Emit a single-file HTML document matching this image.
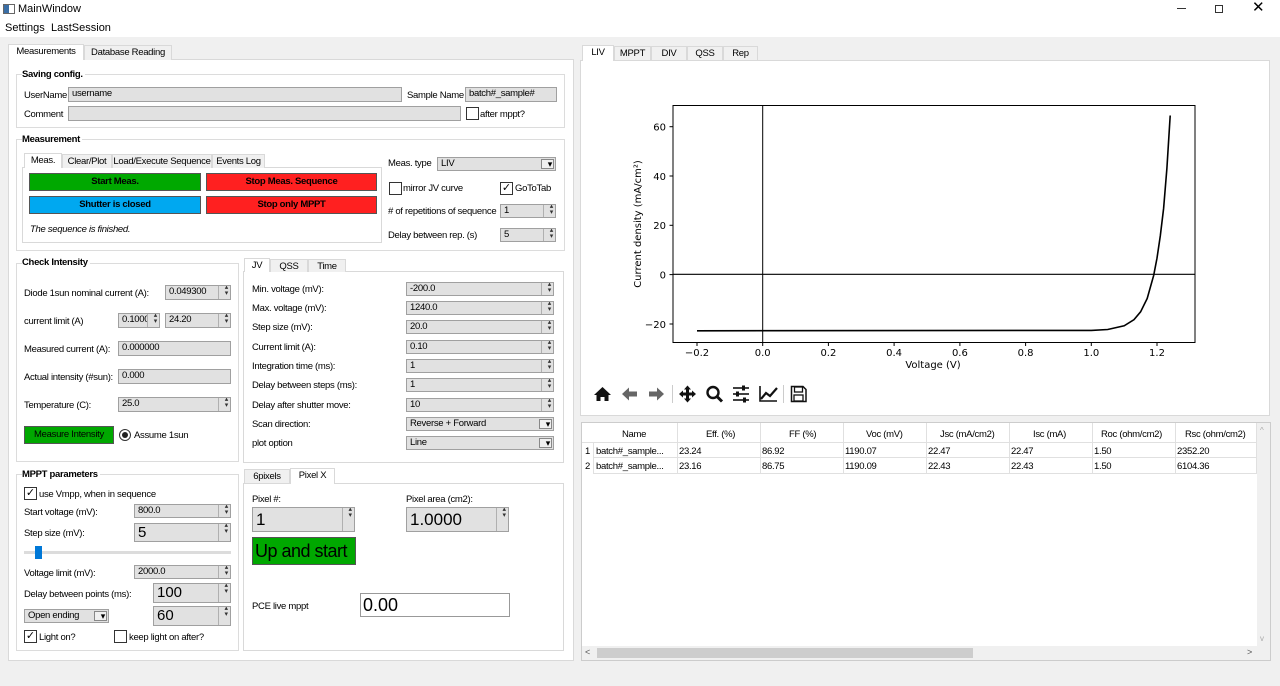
<!DOCTYPE html>
<html><head><meta charset="utf-8"><style>
*{box-sizing:border-box;margin:0;padding:0}
body{width:1280px;height:686px;background:#f0f0f0;position:relative;overflow:hidden;font-family:"Liberation Sans",sans-serif;font-size:9.5px;letter-spacing:-0.3px;color:#000}
.a{position:absolute}
.t{position:absolute;white-space:nowrap;line-height:13px}
.f{position:absolute;background:#e1e1e1;border:1px solid #a0a0a0;line-height:12px;padding-left:3px;white-space:nowrap;overflow:hidden}
.sp::after{content:"";position:absolute;right:0;top:0;bottom:0;width:11px;border-left:1px solid #b0b0b0;background:#e1e1e1}
.sp::before{content:"▴\A▾";white-space:pre;position:absolute;right:2px;top:-1px;font-size:7px;line-height:6px;z-index:2;color:#333}
.cb::after{content:"";position:absolute;right:1px;top:1px;bottom:1px;width:11px;border:1px solid #888;background:#f0f0f0}
.cb::before{content:"▾";position:absolute;right:3px;top:0;font-size:9px;z-index:2}
.g{position:absolute;border:1px solid #dcdcdc;background:#fff}
.gt{position:absolute;font-weight:bold;background:#fff;padding-right:2px;line-height:13px;white-space:nowrap}
.tab{position:absolute;border:1px solid #d9d9d9;border-bottom:none;background:#f0f0f0;text-align:center;line-height:14px;white-space:nowrap;overflow:hidden}
.tab.s{background:#fff;z-index:2}
.pane{position:absolute;border:1px solid #d9d9d9;background:#fff}
.btn{position:absolute;text-align:center;font-weight:bold;border:1px solid #555;line-height:16px;white-space:nowrap}
.chk{position:absolute;width:13px;height:13px;border:1px solid #333;background:#fff;font-size:11px;line-height:11px;text-align:center;letter-spacing:0}
.big{font-size:17px;line-height:22px;background:#e1e1e1;letter-spacing:0}
</style></head><body>
<div class="a" style="left:0;top:0;width:1280px;height:37px;background:#fff"></div>
<div class="a" style="left:3px;top:4px;width:12px;height:10px;border:1px solid #666;background:linear-gradient(90deg,#3a6ea5 50%,#fff 50%)"></div>
<div class="t" style="left:18px;top:3px;font-size:11px;letter-spacing:0">MainWindow</div>
<div class="t" style="left:5px;top:22px;font-size:11px;letter-spacing:0">Settings</div>
<div class="t" style="left:51px;top:22px;font-size:11px;letter-spacing:0">LastSession</div>
<div class="a" style="left:1177px;top:8px;width:9px;height:1px;background:#333"></div>
<div class="a" style="left:1215px;top:5px;width:8px;height:8px;border:1px solid #333"></div>
<div class="t" style="left:1252px;top:1px;font-size:15px">✕</div>

<div class="pane" style="left:8px;top:59px;width:566px;height:602px"></div>
<div class="tab s" style="left:8px;top:44px;width:76px;height:16px">Measurements</div>
<div class="tab" style="left:84px;top:45px;width:88px;height:15px">Database Reading</div>

<div class="g" style="left:16px;top:74px;width:549px;height:54px"></div>
<div class="gt" style="left:22px;top:68px">Saving config.</div>
<div class="t" style="left:24px;top:89px">UserName</div>
<div class="f" style="left:68px;top:87px;width:334px;height:15px">username</div>
<div class="t" style="left:407px;top:89px">Sample Name</div>
<div class="f" style="left:465px;top:87px;width:92px;height:15px">batch#_sample#</div>
<div class="t" style="left:24px;top:108px">Comment</div>
<div class="f" style="left:68px;top:106px;width:393px;height:15px"></div>
<div class="chk" style="left:466px;top:107px"></div>
<div class="t" style="left:480px;top:108px">after mppt?</div>

<div class="g" style="left:16px;top:139px;width:549px;height:112px"></div>
<div class="gt" style="left:22px;top:133px">Measurement</div>
<div class="pane" style="left:22px;top:167px;width:360px;height:76px"></div>
<div class="tab s" style="left:24px;top:153px;width:38px;height:15px">Meas.</div>
<div class="tab" style="left:62px;top:154px;width:50px;height:14px">Clear/Plot</div>
<div class="tab" style="left:112px;top:154px;width:100px;height:14px">Load/Execute Sequence</div>
<div class="tab" style="left:212px;top:154px;width:53px;height:14px">Events Log</div>
<div class="btn" style="left:29px;top:173px;width:172px;height:18px;background:#00a800">Start Meas.</div>
<div class="btn" style="left:206px;top:173px;width:171px;height:18px;background:#ff2020">Stop Meas. Sequence</div>
<div class="btn" style="left:29px;top:196px;width:172px;height:18px;background:#00a8f0">Shutter is closed</div>
<div class="btn" style="left:206px;top:196px;width:171px;height:18px;background:#ff2020">Stop only MPPT</div>
<div class="t" style="left:30px;top:223px;font-style:italic">The sequence is finished.</div>
<div class="t" style="left:388px;top:157px">Meas. type</div>
<div class="f cb" style="left:437px;top:157px;width:119px;height:14px">LIV</div>
<div class="chk" style="left:389px;top:182px"></div>
<div class="t" style="left:403px;top:182px">mirror JV curve</div>
<div class="chk" style="left:500px;top:182px">✓</div>
<div class="t" style="left:515px;top:182px">GoToTab</div>
<div class="t" style="left:388px;top:205px"># of repetitions of sequence</div>
<div class="f sp" style="left:500px;top:204px;width:56px;height:14px">1</div>
<div class="t" style="left:388px;top:229px">Delay between rep. (s)</div>
<div class="f sp" style="left:500px;top:228px;width:56px;height:14px">5</div>

<div class="g" style="left:16px;top:263px;width:223px;height:199px"></div>
<div class="gt" style="left:22px;top:256px">Check Intensity</div>
<div class="t" style="left:24px;top:287px">Diode 1sun nominal current (A):</div>
<div class="f sp" style="left:165px;top:285px;width:66px;height:15px">0.049300</div>
<div class="t" style="left:24px;top:315px">current limit (A)</div>
<div class="f sp" style="left:118px;top:313px;width:42px;height:15px">0.1000</div>
<div class="f sp" style="left:165px;top:313px;width:66px;height:15px">24.20</div>
<div class="t" style="left:24px;top:343px">Measured current (A):</div>
<div class="f" style="left:118px;top:341px;width:113px;height:15px">0.000000</div>
<div class="t" style="left:24px;top:371px">Actual intensity (#sun):</div>
<div class="f" style="left:118px;top:369px;width:113px;height:15px">0.000</div>
<div class="t" style="left:24px;top:399px">Temperature (C):</div>
<div class="f sp" style="left:118px;top:397px;width:113px;height:15px">25.0</div>
<div class="a" style="left:24px;top:426px;width:90px;height:18px;background:#00a800;border:1px solid #555;text-align:center;line-height:16px;white-space:nowrap">Measure Intensity</div>
<div class="a" style="left:119px;top:429px;width:12px;height:12px;border-radius:50%;border:1px solid #333;background:#fff"><div class="a" style="left:2px;top:2px;width:6px;height:6px;border-radius:50%;background:#222"></div></div>
<div class="t" style="left:134px;top:429px">Assume 1sun</div>

<div class="pane" style="left:243px;top:271px;width:321px;height:192px"></div>
<div class="tab s" style="left:244px;top:258px;width:26px;height:14px">JV</div>
<div class="tab" style="left:270px;top:259px;width:38px;height:13px">QSS</div>
<div class="tab" style="left:308px;top:259px;width:38px;height:13px">Time</div>
<div class="t" style="left:252px;top:283px">Min. voltage (mV):</div><div class="f sp" style="left:406px;top:282px;width:148px;height:14px">-200.0</div>
<div class="t" style="left:252px;top:302px">Max. voltage (mV):</div><div class="f sp" style="left:406px;top:301px;width:148px;height:14px">1240.0</div>
<div class="t" style="left:252px;top:321px">Step size (mV):</div><div class="f sp" style="left:406px;top:320px;width:148px;height:14px">20.0</div>
<div class="t" style="left:252px;top:341px">Current limit (A):</div><div class="f sp" style="left:406px;top:340px;width:148px;height:14px">0.10</div>
<div class="t" style="left:252px;top:360px">Integration time (ms):</div><div class="f sp" style="left:406px;top:359px;width:148px;height:14px">1</div>
<div class="t" style="left:252px;top:379px">Delay between steps (ms):</div><div class="f sp" style="left:406px;top:378px;width:148px;height:14px">1</div>
<div class="t" style="left:252px;top:399px">Delay after shutter move:</div><div class="f sp" style="left:406px;top:398px;width:148px;height:14px">10</div>
<div class="t" style="left:252px;top:418px">Scan direction:</div><div class="f cb" style="left:406px;top:417px;width:148px;height:14px">Reverse + Forward</div>
<div class="t" style="left:252px;top:437px">plot option</div><div class="f cb" style="left:406px;top:436px;width:148px;height:14px">Line</div>

<div class="g" style="left:16px;top:474px;width:223px;height:177px"></div>
<div class="gt" style="left:22px;top:468px">MPPT parameters</div>
<div class="chk" style="left:24px;top:487px">✓</div><div class="t" style="left:39px;top:488px">use Vmpp, when in sequence</div>
<div class="t" style="left:24px;top:506px">Start voltage (mV):</div><div class="f sp" style="left:134px;top:504px;width:97px;height:14px">800.0</div>
<div class="t" style="left:24px;top:527px">Step size (mV):</div><div class="f sp big" style="left:134px;top:523px;width:97px;height:19px;font-size:15px;line-height:17px">5</div>
<div class="a" style="left:24px;top:551px;width:207px;height:3px;background:#dcdcdc"></div>
<div class="a" style="left:35px;top:546px;width:7px;height:13px;background:#0078d7"></div>
<div class="t" style="left:24px;top:567px">Voltage limit (mV):</div><div class="f sp" style="left:134px;top:565px;width:97px;height:14px">2000.0</div>
<div class="t" style="left:24px;top:588px">Delay between points (ms):</div><div class="f sp big" style="left:153px;top:583px;width:78px;height:20px;font-size:15px;line-height:18px">100</div>
<div class="f cb" style="left:24px;top:609px;width:85px;height:14px">Open ending</div>
<div class="f sp big" style="left:153px;top:606px;width:78px;height:20px;font-size:15px;line-height:18px">60</div>
<div class="chk" style="left:24px;top:630px">✓</div><div class="t" style="left:39px;top:631px">Light on?</div>
<div class="chk" style="left:114px;top:630px"></div><div class="t" style="left:129px;top:631px">keep light on after?</div>

<div class="pane" style="left:243px;top:483px;width:321px;height:168px"></div>
<div class="tab" style="left:244px;top:469px;width:46px;height:14px">6pixels</div>
<div class="tab s" style="left:290px;top:468px;width:45px;height:16px">Pixel X</div>
<div class="t" style="left:252px;top:493px">Pixel #:</div>
<div class="f sp big" style="left:252px;top:507px;width:103px;height:25px;font-size:17px;line-height:23px">1</div>
<div class="t" style="left:406px;top:493px">Pixel area (cm2):</div>
<div class="f sp big" style="left:406px;top:507px;width:103px;height:25px;font-size:17px;line-height:23px">1.0000</div>
<div class="a" style="left:252px;top:537px;width:104px;height:28px;background:#00a800;border:1px solid #555;font-size:18px;line-height:26px;padding-left:2px;letter-spacing:-0.5px;white-space:nowrap">Up and start</div>
<div class="t" style="left:252px;top:600px">PCE live mppt</div>
<div class="a" style="left:360px;top:593px;width:150px;height:24px;border:1px solid #999;background:#fff;font-size:18px;line-height:22px;padding-left:2px;letter-spacing:0">0.00</div>

<div class="pane" style="left:580px;top:60px;width:690px;height:356px"></div>
<div class="tab s" style="left:582px;top:45px;width:32px;height:16px">LIV</div>
<div class="tab" style="left:614px;top:46px;width:37px;height:14px">MPPT</div>
<div class="tab" style="left:651px;top:46px;width:36px;height:14px">DIV</div>
<div class="tab" style="left:687px;top:46px;width:36px;height:14px">QSS</div>
<div class="tab" style="left:723px;top:46px;width:35px;height:14px">Rep</div>

<svg class="a" style="left:0;top:0;letter-spacing:0" width="1280" height="686" font-family="DejaVu Sans, sans-serif" font-size="10">
<rect x="673" y="105.5" width="522" height="237" fill="#fff" stroke="#000" stroke-width="1"/>
<line x1="762.7" y1="105.5" x2="762.7" y2="342.5" stroke="#000"/>
<line x1="673" y1="274.3" x2="1195" y2="274.3" stroke="#000" stroke-width="1.2"/>
<polyline fill="none" stroke="#000" stroke-width="1.6" points="697,330.8 1091.3,330.4 1107.7,329.5 1124.2,325.8 1134,319.7 1140.6,311.8 1147.2,298.5 1153.7,275.3 1157,258.1 1160.3,235.9 1163.6,208.5 1166.9,168.3 1170.2,115.5"/>
<g stroke="#000">
<line x1="697" y1="342.5" x2="697" y2="346"/><line x1="762.7" y1="342.5" x2="762.7" y2="346"/><line x1="828.4" y1="342.5" x2="828.4" y2="346"/><line x1="894.1" y1="342.5" x2="894.1" y2="346"/><line x1="959.9" y1="342.5" x2="959.9" y2="346"/><line x1="1025.6" y1="342.5" x2="1025.6" y2="346"/><line x1="1091.3" y1="342.5" x2="1091.3" y2="346"/><line x1="1157" y1="342.5" x2="1157" y2="346"/>
<line x1="669.5" y1="126.7" x2="673" y2="126.7"/><line x1="669.5" y1="176" x2="673" y2="176"/><line x1="669.5" y1="225.3" x2="673" y2="225.3"/><line x1="669.5" y1="274.6" x2="673" y2="274.6"/><line x1="669.5" y1="324" x2="673" y2="324"/>
</g>
<g text-anchor="middle">
<text x="697" y="356">−0.2</text><text x="762.7" y="356">0.0</text><text x="828.4" y="356">0.2</text><text x="894.1" y="356">0.4</text><text x="959.9" y="356">0.6</text><text x="1025.6" y="356">0.8</text><text x="1091.3" y="356">1.0</text><text x="1157" y="356">1.2</text>
<text x="933" y="368">Voltage (V)</text>
</g>
<g text-anchor="end">
<text x="666" y="130.5">60</text><text x="666" y="180">40</text><text x="666" y="229">20</text><text x="666" y="278.5">0</text><text x="666" y="328">−20</text>
</g>
<text transform="translate(641,224) rotate(-90)" text-anchor="middle">Current density (mA/cm²)</text>
<g fill="#111">
<path d="M594 395 L602.5 387 L611 395 L608.5 395 L608.5 401 L604.5 401 L604.5 397 L600.5 397 L600.5 401 L596.5 401 L596.5 395 Z"/>
<path d="M622 394 L629 387.5 L629 391.5 L637 391.5 L637 396.5 L629 396.5 L629 400.5 Z" fill="#666"/>
<path d="M664 394 L657 387.5 L657 391.5 L649 391.5 L649 396.5 L657 396.5 L657 400.5 Z" fill="#666"/>
<path d="M687.5 385.5 L691 389.5 L689 389.5 L689 392.5 L692 392.5 L692 390.5 L696 394 L692 397.5 L692 395.5 L689 395.5 L689 398.5 L691 398.5 L687.5 402.5 L684 398.5 L686 398.5 L686 395.5 L683 395.5 L683 397.5 L679 394 L683 390.5 L683 392.5 L686 392.5 L686 389.5 L684 389.5 Z"/>
</g>
<circle cx="713" cy="392.5" r="5.5" fill="none" stroke="#111" stroke-width="2.4"/>
<line x1="717" y1="396.5" x2="722" y2="401.5" stroke="#111" stroke-width="3"/>
<g stroke="#111" stroke-width="1.6"><line x1="733" y1="388" x2="749" y2="388"/><line x1="733" y1="394" x2="749" y2="394"/><line x1="733" y1="400" x2="749" y2="400"/></g>
<g fill="#111"><rect x="742" y="385.5" width="3" height="5"/><rect x="736" y="391.5" width="3" height="5"/><rect x="743" y="397.5" width="3" height="5"/></g>
<path d="M760 386 L760 401 L777 401" fill="none" stroke="#111" stroke-width="1.6"/>
<path d="M761 399 L766 393 L770 396 L777 388" fill="none" stroke="#111" stroke-width="2.2"/>
<path d="M791.5 386.5 L803 386.5 L806 389.5 L806 401.5 L791.5 401.5 Z" fill="none" stroke="#111" stroke-width="1.5"/>
<rect x="794.5" y="387" width="8" height="5" fill="none" stroke="#111" stroke-width="1.3"/>
<rect x="794" y="395" width="9" height="6" fill="none" stroke="#111" stroke-width="1.3"/>
<line x1="672.5" y1="385" x2="672.5" y2="403" stroke="#ccc"/><line x1="783.5" y1="385" x2="783.5" y2="403" stroke="#ccc"/>
</svg>

<div class="a" style="left:581px;top:422px;width:690px;height:239px;background:#fff;border:1px solid #ccc"></div>
<div class="a" style="left:582px;top:423px;width:675px;height:20px;border-bottom:1px solid #e0e0e0"></div>
<div class="a" style="left:582px;top:443px;width:12px;height:31px;background:#fff;border-right:1px solid #e0e0e0"></div>
<div class="a" style="left:594px;top:457px;width:663px;height:1px;background:#e0e0e0"></div>
<div class="a" style="left:594px;top:473px;width:663px;height:1px;background:#e0e0e0"></div>
<div class="t" style="left:622px;top:428px">Name</div>
<div class="t" style="left:706px;top:428px">Eff. (%)</div>
<div class="t" style="left:789px;top:428px">FF (%)</div>
<div class="t" style="left:866px;top:428px">Voc (mV)</div>
<div class="t" style="left:940px;top:428px">Jsc (mA/cm2)</div>
<div class="t" style="left:1033px;top:428px">Isc (mA)</div>
<div class="t" style="left:1101px;top:428px">Roc (ohm/cm2)</div>
<div class="t" style="left:1185px;top:428px">Rsc (ohm/cm2)</div>
<div class="a" style="left:677px;top:423px;width:1px;height:51px;background:#e0e0e0"></div>
<div class="a" style="left:760px;top:423px;width:1px;height:51px;background:#e0e0e0"></div>
<div class="a" style="left:843px;top:423px;width:1px;height:51px;background:#e0e0e0"></div>
<div class="a" style="left:926px;top:423px;width:1px;height:51px;background:#e0e0e0"></div>
<div class="a" style="left:1009px;top:423px;width:1px;height:51px;background:#e0e0e0"></div>
<div class="a" style="left:1092px;top:423px;width:1px;height:51px;background:#e0e0e0"></div>
<div class="a" style="left:1175px;top:423px;width:1px;height:51px;background:#e0e0e0"></div>
<div class="a" style="left:1256px;top:423px;width:1px;height:51px;background:#e0e0e0"></div>
<div class="t" style="left:585px;top:445px">1</div><div class="t" style="left:596px;top:445px">batch#_sample...</div><div class="t" style="left:679px;top:445px">23.24</div><div class="t" style="left:762px;top:445px">86.92</div><div class="t" style="left:845px;top:445px">1190.07</div><div class="t" style="left:928px;top:445px">22.47</div><div class="t" style="left:1011px;top:445px">22.47</div><div class="t" style="left:1094px;top:445px">1.50</div><div class="t" style="left:1177px;top:445px">2352.20</div>
<div class="t" style="left:585px;top:460px">2</div><div class="t" style="left:596px;top:460px">batch#_sample...</div><div class="t" style="left:679px;top:460px">23.16</div><div class="t" style="left:762px;top:460px">86.75</div><div class="t" style="left:845px;top:460px">1190.09</div><div class="t" style="left:928px;top:460px">22.43</div><div class="t" style="left:1011px;top:460px">22.43</div><div class="t" style="left:1094px;top:460px">1.50</div><div class="t" style="left:1177px;top:460px">6104.36</div>
<div class="a" style="left:1257px;top:423px;width:13px;height:223px;background:#f0f0f0"></div>
<div class="t" style="left:1260px;top:424px;font-size:8px;color:#aaa">^</div>
<div class="t" style="left:1260px;top:632px;font-size:8px;color:#aaa">v</div>
<div class="a" style="left:582px;top:646px;width:688px;height:14px;background:#f0f0f0"></div>
<div class="a" style="left:597px;top:648px;width:376px;height:10px;background:#cdcdcd"></div>
<div class="t" style="left:585px;top:646px;font-size:9px;color:#555">&lt;</div>
<div class="t" style="left:1247px;top:646px;font-size:9px;color:#555">&gt;</div>
</body></html>
